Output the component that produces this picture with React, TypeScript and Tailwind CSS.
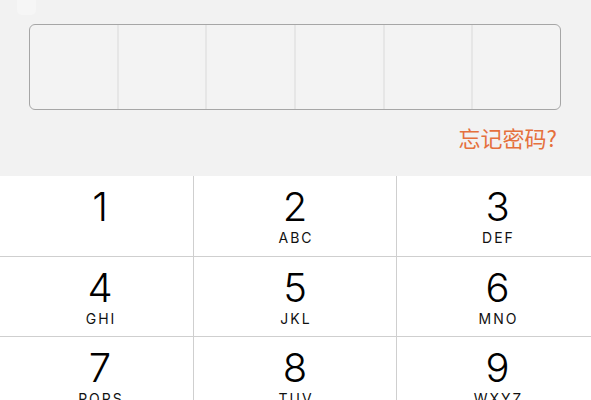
import React from "react";

const keys: { d: string; l: string }[][] = [
  [
    { d: "1", l: "" },
    { d: "2", l: "ABC" },
    { d: "3", l: "DEF" },
  ],
  [
    { d: "4", l: "GHI" },
    { d: "5", l: "JKL" },
    { d: "6", l: "MNO" },
  ],
  [
    { d: "7", l: "PQRS" },
    { d: "8", l: "TUV" },
    { d: "9", l: "WXYZ" },
  ],
];

const rowH = ["h-[81px]", "h-[80px]", "h-[80px]"];
const colCls = ["pl-[7px] border-r border-[#cfcfcf]", "border-r border-[#cfcfcf]", "pl-[7px]"];

export default function App() {
  return (
    <div className="w-[591px] h-[400px] overflow-hidden bg-[#f2f2f2] flex flex-col" style={{ fontFamily: "Inter, 'Noto Sans CJK SC', sans-serif" }}>
      <div className="h-[176px] flex flex-col shrink-0">
        <div className="ml-[17px] w-[19px] h-[15px] rounded-b-[5px] bg-[#f6f6f6]" />
        <div className="mt-[9px] ml-[29px] w-[532px] h-[86px] rounded-[6px] border border-[#a6a6a6] bg-[#f3f3f3] flex overflow-hidden">
          {[0, 1, 2, 3, 4, 5].map((i) => (
            <div key={i} className={"flex-1 h-full " + (i > 0 ? "border-l-2 border-[#e6e6e6]" : "")} />
          ))}
        </div>
        <div className="mt-[13px] pr-[34px] flex justify-end">
          <span className="text-[22px] leading-[28px] text-[#e5703d]" style={{ fontFamily: "'Noto Sans CJK SC', sans-serif" }}>
            忘记密码?
          </span>
        </div>
      </div>
      <div className="bg-white flex-1 flex flex-col">
        {keys.map((row, ri) => (
          <div key={ri} className={"grid grid-cols-[194px_203px_1fr] shrink-0 border-b border-[#cfcfcf] " + rowH[ri]}>
            {row.map((k, ci) => (
              <div key={ci} className={"flex flex-col items-center pt-[11px] " + colCls[ci]}>
                <div className="text-[40px] leading-[40px] font-light text-black">{k.d}</div>
                <div className="mt-[4px] text-[14px] leading-[14px] tracking-[2px] pl-[2px] text-[#111]">{k.l}</div>
              </div>
            ))}
          </div>
        ))}
      </div>
    </div>
  );
}
